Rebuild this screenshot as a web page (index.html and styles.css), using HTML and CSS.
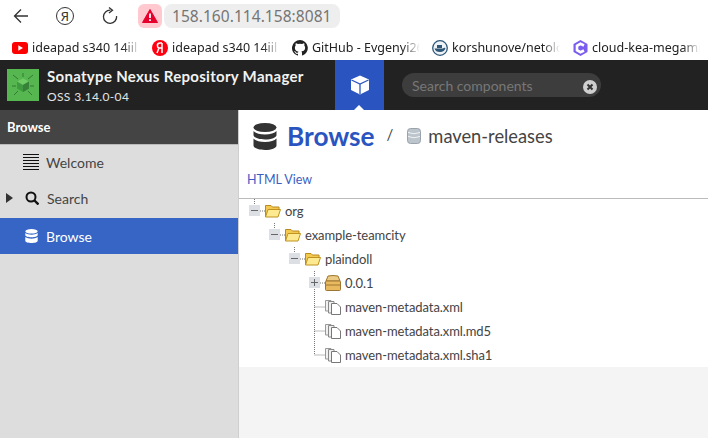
FILE: index.html
```html
<!DOCTYPE html>
<html lang="en">
<head>
    <meta charset="UTF-8">
    <title>Nexus Repository Manager</title>
    <link rel="stylesheet" href="styles.css">
</head>
<body>
    <svg class="defs" width="0" height="0">
        <symbol id="elbow-mid" viewBox="0 0 16 24"><path d="M5.500 0V24M5.500 12H16" stroke="#777" stroke-dasharray="1 1" fill="none"/></symbol>
        <symbol id="elbow-end" viewBox="0 0 16 24"><path d="M5.500 0V12H16" stroke="#777" stroke-dasharray="1 1" fill="none"/></symbol>
        <symbol id="elbow-open" viewBox="0 0 16 24"><path d="M5.500 0V7M11 12H16" stroke="#777" stroke-dasharray="1 1" fill="none"/><rect x="0" y="6" width="11" height="11" fill="#dcdfe3"/><path d="M2 11.500H9" stroke="#666"/></symbol>
        <symbol id="elbow-closed" viewBox="0 0 16 24"><path d="M5.500 0V24M11 12H16" stroke="#777" stroke-dasharray="1 1" fill="none"/><rect x="0" y="6" width="11" height="11" fill="#dcdfe3"/><path d="M2 11.500H9M5.500 8V15" stroke="#666"/></symbol>
        <symbol id="folder" viewBox="0 0 16 16"><path d="M.5 14V2.500H6L7.500 4H14V6.500" fill="#f3c94f" stroke="#b98a1e"/><path d="M.5 14 3 6.500H15.500L13 14Z" fill="#fde98f" stroke="#c0921f"/></symbol>
        <symbol id="box" viewBox="0 0 16 16"><path d="M1 6 3 1Q8 0 13 1L15 6Z" fill="#eccb85" stroke="#9c7632"/><rect x=".5" y="6" width="15" height="9.500" rx="1" fill="#e9b95f" stroke="#9c7632"/><path d="M1 10H15" stroke="#9c7632"/></symbol>
        <symbol id="file" viewBox="0 0 16 16"><path d="M.5 1.500H6V12H.5Z" fill="#f0f0f0" stroke="#999"/><path d="M3.500 2.500H9V14H3.500Z" fill="#f0f0f0" stroke="#888"/><path d="M6.500 4.500H12L15.500 8V15.500H6.500Z" fill="#fff" stroke="#777"/></symbol>
    </svg>

    <div class="toolbar">
        <svg class="tool-icon" width="16" height="16" viewBox="0 0 16 16"><path d="M15 8H1.500M8 1.500 1.500 8 8 14.500" fill="none" stroke="#333" stroke-width="1.300"/></svg>
        <span class="yandex-btn">Я</span>
        <svg class="tool-icon reload" width="18" height="18" viewBox="0 0 18 18"><path d="M9.500 3.200A6.600 6.600 0 1 0 15.600 9" fill="none" stroke="#333" stroke-width="1.300"/><path d="M8 .5 11.500 3.200 8 6" fill="none" stroke="#333" stroke-width="1.300"/></svg>
        <span class="warn-tile">
            <svg width="16" height="14" viewBox="0 0 16 14"><path d="M8 .5 15.500 13.500H.5Z" fill="#e8002d" stroke="#e8002d" stroke-linejoin="round"/><path d="M8 4.500V9M8 10.300V12" stroke="#fff" stroke-width="1.800"/></svg>
        </span>
        <span class="url-pill">158.160.114.158:8081</span>
    </div>

    <div class="bookmarks">
        <div class="bookmark">
            <svg width="16" height="12" viewBox="0 0 16 12"><rect width="16" height="12" rx="3" fill="#f00"/><path d="M6.300 3.200 11 6 6.300 8.800Z" fill="#fff"/></svg>
            <span class="bookmark-name">ideapad s340 14iil</span>
        </div>
        <div class="bookmark">
            <svg width="16" height="16" viewBox="0 0 16 16"><circle cx="8" cy="8" r="8" fill="#f01"/><path d="M10 3H8Q5.400 3 5.400 5.500 5.400 7.400 7 8L5 13M10 3V13M10 8H7.600" fill="none" stroke="#fff" stroke-width="1.500"/></svg>
            <span class="bookmark-name">ideapad s340 14iil</span>
        </div>
        <div class="bookmark">
            <svg width="16" height="16" viewBox="0 0 16 16"><path fill="#222" d="M8 0a8 8 0 0 0-2.500 15.600c.4.1.5-.2.5-.4v-1.400c-2.200.5-2.700-1-2.700-1-.4-.9-.9-1.200-.9-1.200-.7-.5.1-.5.1-.5.8.1 1.200.8 1.200.8.7 1.200 1.900.9 2.300.7.1-.5.3-.9.5-1.100-1.800-.2-3.600-.9-3.600-4 0-.9.3-1.600.8-2.100-.1-.2-.4-1 .1-2.100 0 0 .7-.2 2.200.8a7.600 7.600 0 0 1 4 0c1.500-1 2.200-.8 2.200-.8.4 1.100.2 1.900.1 2.100.5.6.8 1.300.8 2.100 0 3.100-1.900 3.700-3.700 3.900.3.3.6.8.6 1.500v2.200c0 .2.100.5.600.4A8 8 0 0 0 8 0z"/></svg>
            <span class="bookmark-name">GitHub - Evgenyi26</span>
        </div>
        <div class="bookmark">
            <svg width="16" height="16" viewBox="0 0 16 16"><circle cx="8" cy="8" r="7.300" fill="#eef3f7" stroke="#2d5677" stroke-width="1.300"/><path d="M2.500 8.500H11Q12 7.500 13.500 8 12.500 11.800 8 12 3.500 12 2.500 8.500Z" fill="#2d5677"/><rect x="5" y="5" width="5" height="3" fill="#2d5677"/></svg>
            <span class="bookmark-name">korshunove/netolo</span>
        </div>
        <div class="bookmark bookmark-last">
            <svg width="15" height="16" viewBox="0 0 15 16"><path d="M7.500 0 14.500 4V12L7.500 16 .5 12V4Z" fill="#7b5cf0"/><path d="M11 5.500 7.500 3.800 4 5.800V10.200L7.500 12.200 11 10.500" fill="none" stroke="#fff" stroke-width="2.600"/></svg>
            <span class="bookmark-name">cloud-kea-megami</span>
        </div>
    </div>

    <header class="app-header">
        <div class="logo">
            <svg width="32" height="32" viewBox="0 0 32 32">
                <rect width="32" height="32" fill="#56b64f"/>
                <path d="M6 6 11 10M26 6 21 10M5 17H9M27 17H23M7 26 11 22M25 26 21 22M16 4V8" stroke="#357a35" stroke-width="1"/>
                <path d="M16 9 22 12.500V19.500L16 23 10 19.500V12.500Z" fill="#3f9a40"/>
                <path d="M16 9 22 12.500 16 16 10 12.500Z" fill="#6fcb64"/>
                <path d="M16 16V23L22 19.500V12.500Z" fill="#358238"/>
            </svg>
        </div>
        <div class="brand">
            <div class="brand-name">Sonatype Nexus Repository Manager</div>
            <div class="brand-version">OSS 3.14.0-04</div>
        </div>
        <div class="browse-tab">
            <svg width="20" height="20" viewBox="0 0 20 20"><path d="M10 .5 19 4.500V15L10 19.500 1 15V4.500Z" fill="#fff"/><path d="M1.500 5 10 9 18.500 5M10 9V19" fill="none" stroke="#2a55c0" stroke-width="1.300"/></svg>
            <span class="tab-caret"></span>
        </div>
        <div class="search-pill">
            <span class="search-hint">Search components</span>
            <span class="search-clear">
                <svg width="14" height="14" viewBox="0 0 14 14"><circle cx="7" cy="7" r="7" fill="#cfcfcf"/><path d="M4.500 4.500 9.500 9.500M9.500 4.500 4.500 9.500" stroke="#333" stroke-width="2"/></svg>
            </span>
        </div>
    </header>

    <div class="workspace">
        <aside class="sidebar">
            <div class="sidebar-title">Browse</div>
            <div class="nav-item">
                <svg class="nav-icon" width="16" height="16" viewBox="0 0 16 16"><path d="M0 .5H16M0 3.500H16M0 6.500H16M0 9.500H16M0 12.500H16M0 15.500H16" stroke="#111" stroke-width="1"/></svg>
                <span>Welcome</span>
            </div>
            <div class="nav-item nav-search">
                <span class="nav-arrow"></span>
                <svg class="nav-icon" width="14" height="14" viewBox="0 0 14 14"><circle cx="6" cy="6" r="4.500" fill="none" stroke="#111" stroke-width="2"/><path d="M9.500 9.500 13.500 13.500" stroke="#111" stroke-width="2.400"/></svg>
                <span>Search</span>
            </div>
            <div class="nav-item nav-active">
                <svg class="nav-icon" width="13" height="14" viewBox="0 0 13 14"><ellipse cx="6.500" cy="2.300" rx="6.200" ry="2.300" fill="#fff"/><path d="M.3 4v2c0 1.300 2.800 2.300 6.200 2.300S12.700 7.300 12.700 6V4C11 5.300 9 5.700 6.500 5.700S2 5.300.3 4zM.3 8v3.700C.3 13 3.100 14 6.500 14s6.200-1 6.200-2.300V8C11 9.300 9 9.700 6.500 9.700S2 9.300.3 8z" fill="#fff"/></svg>
                <span>Browse</span>
            </div>
        </aside>

        <main class="content">
            <div class="page-title">
                <svg width="24" height="27" viewBox="0 0 24 27"><ellipse cx="12" cy="4.500" rx="11.500" ry="4.500" fill="#333"/><path d="M.5 8v4c0 2.500 5 4.500 11.500 4.500S23.500 14.500 23.500 12V8c-2 2-6 3.500-11.500 3.500S2.500 10 .5 8zM.5 15.500v7c0 2.500 5 4.500 11.500 4.500s11.500-2 11.500-4.500v-7c-2 2-6 3.500-11.500 3.500S2.500 17.500.5 15.500z" fill="#333"/></svg>
                <h1>Browse</h1>
                <span class="title-sep">/</span>
                <svg width="14" height="16" viewBox="0 0 14 16"><rect x=".5" y=".5" width="13" height="15" rx="3" fill="#bcc4cc" stroke="#9aa3ab"/><path d="M1 4.500Q7 7 13 4.500M1 8.500Q7 11 13 8.500" fill="none" stroke="#f2f4f6"/></svg>
                <span class="repo-name">maven-releases</span>
            </div>
            <a class="html-view">HTML View</a>
            <div class="tree">
                <div class="tree-row lvl-0"><svg class="elbow"><use href="#elbow-open"/></svg><svg class="ico"><use href="#folder"/></svg><span>org</span></div>
                <div class="tree-row lvl-1"><svg class="elbow"><use href="#elbow-open"/></svg><svg class="ico"><use href="#folder"/></svg><span>example-teamcity</span></div>
                <div class="tree-row lvl-2"><svg class="elbow"><use href="#elbow-open"/></svg><svg class="ico"><use href="#folder"/></svg><span>plaindoll</span></div>
                <div class="tree-row lvl-3"><svg class="elbow"><use href="#elbow-closed"/></svg><svg class="ico"><use href="#box"/></svg><span>0.0.1</span></div>
                <div class="tree-row lvl-3"><svg class="elbow"><use href="#elbow-mid"/></svg><svg class="ico"><use href="#file"/></svg><span>maven-metadata.xml</span></div>
                <div class="tree-row lvl-3"><svg class="elbow"><use href="#elbow-mid"/></svg><svg class="ico"><use href="#file"/></svg><span>maven-metadata.xml.md5</span></div>
                <div class="tree-row lvl-3"><svg class="elbow"><use href="#elbow-end"/></svg><svg class="ico"><use href="#file"/></svg><span>maven-metadata.xml.sha1</span></div>
            </div>
            <div class="content-rest"></div>
        </main>
    </div>
</body>
</html>
```

FILE: styles.css
```css
* {
    box-sizing: border-box;
}
html, body {
    height: 100%;
}
body {
    margin: 0;
    display: flex;
    flex-direction: column;
    overflow: hidden;
    background-color: #fff;
    font-family: "Lato", "Liberation Sans", sans-serif;
}
.defs {
    position: absolute;
}

/* browser chrome */
.toolbar {
    height: 32px;
    display: flex;
    align-items: center;
    padding-left: 13px;
}
.tool-icon {
    flex: none;
}
.yandex-btn {
    width: 18px;
    height: 18px;
    margin-left: 27px;
    border: 1.200px solid #333;
    border-radius: 50%;
    display: flex;
    align-items: center;
    justify-content: center;
    color: #333;
    font: 13px "Noto Sans", sans-serif;
}
.reload {
    margin-left: 27px;
}
.warn-tile {
    width: 24px;
    height: 24px;
    margin-left: 19px;
    border-radius: 6px;
    background-color: #ffc9cf;
    display: flex;
    align-items: center;
    justify-content: center;
}
.url-pill {
    width: 176px;
    height: 24px;
    margin-left: 2px;
    padding-left: 8px;
    border-radius: 8px;
    background-color: #eeeeee;
    color: #757575;
    font: 15.500px/24px "Noto Sans", sans-serif;
    letter-spacing: .05px;
    white-space: nowrap;
}
.bookmarks {
    height: 28px;
    display: flex;
    align-items: center;
    padding: 4px 0 0 12px;
}
.bookmark {
    width: 140px;
    flex: none;
    display: flex;
    align-items: center;
    gap: 4px;
}
.bookmark svg {
    flex: none;
}
.bookmark-last {
    padding-left: 1px;
}
.bookmark-name {
    width: 108px;
    white-space: nowrap;
    color: #222;
    font: 12.500px/18px "Noto Sans", sans-serif;
    -webkit-mask-image: linear-gradient(to right, #000 84%, transparent 100%);
    mask-image: linear-gradient(to right, #000 84%, transparent 100%);
}

/* nexus header */
.app-header {
    height: 50px;
    flex: none;
    display: flex;
    background-color: #222222;
    color: #fff;
}
.logo {
    width: 47px;
    padding: 9px 0 0 7px;
}
.brand {
    width: 288px;
    padding-top: 6px;
}
.brand-name {
    font-size: 15px;
    line-height: 20px;
    font-weight: 700;
    color: #f2f2f2;
    letter-spacing: .02em;
}
.brand-version {
    margin-top: 3px;
    font-size: 12px;
    line-height: 16px;
    color: #e4e4e4;
    letter-spacing: .03em;
}
.browse-tab {
    position: relative;
    width: 49px;
    background-color: #2a55c0;
    display: flex;
    align-items: center;
    justify-content: center;
}
.tab-caret {
    position: absolute;
    left: 19px;
    bottom: 0;
    border: 5px solid transparent;
    border-top: 0;
    border-bottom-color: #fff;
}
.search-pill {
    width: 199px;
    height: 24px;
    margin: 13px 0 0 18px;
    padding: 0 4px 0 10px;
    border-radius: 12px;
    background-color: #3d3d3d;
    display: flex;
    align-items: center;
    justify-content: space-between;
}
.search-hint {
    color: #777;
    font-size: 14px;
}
.search-clear {
    height: 14px;
}

/* sidebar */
.workspace {
    flex: 1;
    display: flex;
    min-height: 0;
}
.sidebar {
    width: 239px;
    flex: none;
    background-color: #dddddd;
    border-right: 1px solid #cfcfcf;
}
.sidebar-title {
    height: 35px;
    padding-left: 7px;
    background-color: #444444;
    border-bottom: 1px solid #bbb;
    color: #fff;
    font-size: 13px;
    font-weight: 700;
    line-height: 34px;
}
.nav-item {
    height: 36px;
    display: flex;
    align-items: center;
    padding: 0 0 2px 23px;
    color: #444;
    font-size: 14px;
}
.nav-item span:last-child {
    margin-left: 7px;
}
.nav-search {
    padding-left: 6px;
}
.nav-search span:last-child {
    margin-left: 8px;
}
.nav-arrow {
    width: 0;
    height: 0;
    margin-right: 12px;
    border-left: 7px solid #333;
    border-top: 5px solid transparent;
    border-bottom: 5px solid transparent;
}
.nav-active {
    margin-top: 1px;
    padding: 0 0 0 25px;
    background-color: #3665c6;
    color: #fff;
}
.nav-active span:last-child {
    margin-left: 8px;
}

/* main */
.content {
    flex: 1;
    display: flex;
    flex-direction: column;
    min-width: 0;
}
.page-title {
    height: 54px;
    display: flex;
    align-items: center;
    padding: 0 0 2px 14px;
    color: #444;
}
.page-title h1 {
    margin: 0 0 0 10px;
    color: #2a55c0;
    font-size: 26.200px;
    font-weight: 700;
}
.title-sep {
    margin: 0 14px 4px 12px;
    font-size: 15px;
}
.repo-name {
    margin-left: 7px;
    font-size: 18.300px;
}
.html-view {
    height: 35px;
    padding: 8px 0 0 8px;
    border-bottom: 1px solid #bbb;
    color: #3a5fc4;
    font-size: 12.500px;
}
.tree {
    background-color: #fff;
}
.tree-row {
    height: 24px;
    display: flex;
    align-items: center;
    color: #444;
    font-size: 13px;
    letter-spacing: -.08px;
}
.lvl-0 { padding-left: 10px; }
.lvl-1 { padding-left: 30px; }
.lvl-2 { padding-left: 50px; }
.lvl-3 { padding-left: 70px; }
.elbow {
    width: 16px;
    height: 24px;
    flex: none;
}
.ico {
    width: 16px;
    height: 16px;
    margin-right: 4px;
    flex: none;
}
.content-rest {
    flex: 1;
    background-color: #f4f4f4;
}
```
